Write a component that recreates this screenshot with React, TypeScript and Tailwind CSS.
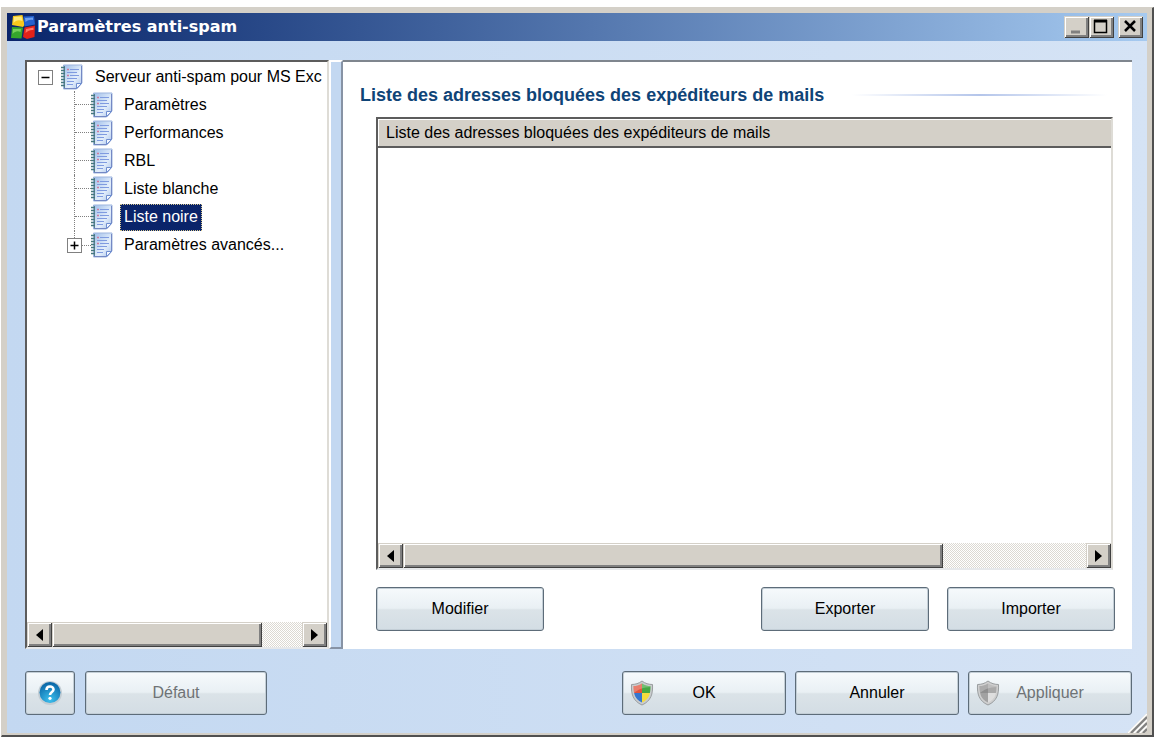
import { clsx } from "clsx";
import { useState } from "react";

const PAGES = [
  "Paramètres",
  "Performances",
  "RBL",
  "Liste blanche",
  "Liste noire",
  "Paramètres avancés...",
];

const RAISED =
  "bg-[#d4d0c8] shadow-[inset_1px_1px_0_#d4d0c8,inset_-1px_-1px_0_#404040,inset_2px_2px_0_#fff,inset_-3px_-3px_0_#808080]";
const SUNKEN =
  "bg-white border-2 border-t-[#5c5c5c] border-l-[#5c5c5c] border-r-[#dedcd6] border-b-[#e6e8ea]";
const GLOSSY =
  "rounded-[3px] border border-[#5d6c79] bg-[linear-gradient(#f6fafc_0%,#e9f0f4_48%,#dbe3e8_52%,#d3dde4_100%)] shadow-[inset_0_0_0_1px_#c3ced6]";

const LogoIcon = () => (
  <svg viewBox="0 0 24 24" className="size-6 shrink-0" aria-hidden="true">
    <path d="M2 1L11.500 0L13.500 10L12 12L1 10Z" fill="#f8c81c" />
    <path d="M12.500 1.500L23 1L24 9.500L13.500 11.500Z" fill="#2461cf" />
    <path d="M1 12L12 12.500L10.500 23.500L0 23Z" fill="#35a62c" />
    <path d="M13.500 12.500L24 10.500L23.500 22L16 24L12 22Z" fill="#e32219" />
    <path d="M3 2L10.500 1.500L11.500 6C8 4.500 5 5 2.500 8Z" fill="#ffea7a" />
    <path d="M14 3L22 2.500L22 5C19 4.500 17 5 14.500 7Z" fill="#6fa0f0" />
    <path d="M2 14L10 14L9.500 17C7 15.500 4 16 1.500 19Z" fill="#78d05c" />
    <path d="M15 14L22.500 12.500L22.500 15C20 14.500 17 15.500 14.500 18Z" fill="#ff7767" />
  </svg>
);

const NotebookIcon = () => (
  <svg viewBox="0 0 22 26" className="h-[26px] w-[22px] shrink-0" aria-hidden="true">
    <defs>
      <linearGradient id="paper" x1="0" y1="0" x2="1" y2="1">
        <stop offset="0" stopColor="#9dbdea" />
        <stop offset=".6" stopColor="#e4effb" />
        <stop offset="1" stopColor="#a5c0ea" />
      </linearGradient>
    </defs>
    <path d="M2.500 1H21V19L15.500 25H2.500Z" fill="url(#paper)" stroke="#9db5de" />
    <path d="M3 24.500H16L20.500 19.500V2" fill="none" stroke="#7488c4" />
    <path d="M15.500 24.500V19.500H20.500Z" fill="#f3f8ff" stroke="#6f8ed0" />
    <path d="M3.500 2V24" stroke="#5a8590" />
    <path d="M0 3.500h4M0 6.500h4M0 9.500h4M0 12.500h4M0 15.500h4M0 18.500h4M0 21.500h4" stroke="#47787e" strokeWidth="1.500" />
    <path d="M6 5.500h2M6 11.500h2" stroke="#d07a9c" strokeWidth="1.500" />
    <path d="M9 5.500h9M6 8.500h10M9 11.500h9M6 14.500h10M6 17.500h7M6 20.500h6" stroke="#7f9be0" />
  </svg>
);

const ShieldIcon = ({ muted = false }: { muted?: boolean }) => {
  const [a, b, c, d] = muted
    ? ["#8f8f8f", "#a9a9a9", "#a2a2a2", "#dedede"]
    : ["#e2533c", "#45a843", "#3576cf", "#f5dc3d"];
  const id = muted ? "shield-muted" : "shield";
  return (
    <svg viewBox="0 0 24 26" className="h-[26px] w-6 shrink-0" aria-hidden="true">
      <clipPath id={id}>
        <path d="M12 3.500C15 5.500 17.500 6 20.500 6C20.500 14 19 19.500 12 22.500C5 19.500 3.500 14 3.500 6C6.500 6 9 5.500 12 3.500Z" />
      </clipPath>
      <path
        d="M12 1C15 3.500 19 4.500 22.500 4.500C23 14 21 21 12 25C3 21 1 14 1.500 4.500C5 4.500 9 3.500 12 1Z"
        fill={muted ? "#cfcfcf" : "#c9ccce"}
        stroke="#999d9f"
      />
      <g clipPath={`url(#${id})`}>
        <path d="M2 2H12V13H2Z" fill={a} />
        <path d="M12 2H22V13H12Z" fill={b} />
        <path d="M2 13H12V24H2Z" fill={c} />
        <path d="M12 13H22V24H12Z" fill={d} />
        <path d="M2 2H22V7C14 7 8 9 3 14Z" fill="#fff" opacity=".25" />
      </g>
    </svg>
  );
};

const HelpIcon = () => (
  <svg viewBox="0 0 26 26" className="size-[26px]" aria-hidden="true">
    <defs>
      <radialGradient id="help" cx=".5" cy=".85" r=".8">
        <stop offset="0" stopColor="#3cc0ee" />
        <stop offset="1" stopColor="#0b69a9" />
      </radialGradient>
    </defs>
    <circle cx="13" cy="13" r="12" fill="#c3cdd4" />
    <circle cx="13" cy="12.500" r="10.500" fill="url(#help)" />
    <path d="M9.500 10C9.500 5.500 16.500 5.500 16.500 9.500C16.500 12 13 12 13 15" fill="none" stroke="#fff" strokeWidth="2.600" />
    <circle cx="13" cy="18.300" r="1.600" fill="#fff" />
  </svg>
);

const Expander = ({ open }: { open: boolean }) => (
  <svg viewBox="0 0 15 15" className="size-[15px] shrink-0" aria-hidden="true">
    <rect x=".5" y=".5" width="14" height="14" fill="#fff" stroke="#808080" />
    <path d={open ? "M3.500 7.500h8" : "M3.500 7.500h8M7.500 3.500v8"} stroke="#000" strokeWidth="1.500" />
  </svg>
);

const Arrow = ({ left = false }: { left?: boolean }) => (
  <button
    type="button"
    aria-label={left ? "Défiler à gauche" : "Défiler à droite"}
    className={clsx("grid h-[25px] w-[25px] shrink-0 place-items-center", RAISED)}
  >
    <svg viewBox="0 0 7 12" className="h-3 w-[7px]" aria-hidden="true">
      <path d={left ? "M7 0V12L0 6Z" : "M0 0V12L7 6Z"} fill="#000" />
    </svg>
  </button>
);

const ScrollBar = ({ thumb }: { thumb: string }) => (
  <div className="flex shrink-0 bg-[#eae8e3]">
    <Arrow left />
    <div className="flex-1 bg-[repeating-conic-gradient(#fff_0_25%,#dcd9d2_0_50%)] bg-[length:2px_2px]">
      <div className={clsx("h-full", thumb, RAISED)} />
    </div>
    <Arrow />
  </div>
);

const PushButton = ({
  children,
  icon,
  className,
  disabled,
}: {
  children: React.ReactNode;
  icon?: React.ReactNode;
  className: string;
  disabled?: boolean;
}) => (
  <button
    type="button"
    disabled={disabled}
    className={clsx("flex h-11 items-center px-[7px] disabled:text-[#6f7376]", GLOSSY, className)}
  >
    {icon}
    <span className="flex-1 text-center">{children}</span>
    {icon && <span className="w-6" />}
  </button>
);

const TitleBar = () => (
  <header className="flex h-7 items-center bg-linear-to-r from-[#0a246a] to-[#a6caf0] pr-1 pl-1 text-white">
    <LogoIcon />
    <h1 className="ml-0.5 flex-1 font-['DejaVu_Sans',sans-serif] text-base leading-6 font-bold">
      Paramètres anti-spam
    </h1>
    <button type="button" aria-label="Réduire" className={clsx("h-[22px] w-[25px]", RAISED)}>
      <svg viewBox="0 0 25 22" aria-hidden="true">
        <path d="M7 16h9" stroke="#808080" strokeWidth="3" />
      </svg>
    </button>
    <button type="button" aria-label="Agrandir" className={clsx("h-[22px] w-[25px]", RAISED)}>
      <svg viewBox="0 0 25 22" aria-hidden="true">
        <path d="M5 5h13" stroke="#000" strokeWidth="3" />
        <path d="M5.500 4v12.500h12v-12.500" fill="none" stroke="#000" strokeWidth="1.500" />
      </svg>
    </button>
    <button type="button" aria-label="Fermer" className={clsx("ml-1 h-[22px] w-[25px]", RAISED)}>
      <svg viewBox="0 0 25 22" aria-hidden="true">
        <path d="M7 5l10 10M17 5l-10 10" stroke="#000" strokeWidth="2.500" />
      </svg>
    </button>
  </header>
);

const SettingsTree = () => {
  const [selected, setSelected] = useState("Liste noire");

  return (
    <nav className={clsx("flex w-[304px] shrink-0 flex-col overflow-hidden", SUNKEN)}>
      <div className="flex-1 overflow-hidden pt-px pl-[11px] whitespace-nowrap">
        <div className="flex h-7 items-center">
          <Expander open />
          <span className="ml-2">
            <NotebookIcon />
          </span>
          <button type="button" className="ml-3">
            Serveur anti-spam pour MS Exc
          </button>
        </div>
        <ul className="pl-[29px]">
          {PAGES.map((page, i) => (
            <li key={page} className="flex h-7 items-center">
              {i < PAGES.length - 1 ? (
                <span className="ml-[7px] grid h-7 w-[17px] grid-rows-2 border-l border-dotted border-[#808080]">
                  <span className="border-b border-dotted border-[#808080]" />
                </span>
              ) : (
                <>
                  <span className="flex h-7 w-[15px] flex-col items-center">
                    <span className="h-[7px] border-l border-dotted border-[#808080]" />
                    <Expander open={false} />
                  </span>
                  <span className="w-[9px] border-b border-dotted border-[#808080]" />
                </>
              )}
              <NotebookIcon />
              <button
                type="button"
                onClick={() => setSelected(page)}
                className={clsx(
                  "ml-[7px] h-[27px] border border-dotted px-[3px] leading-6",
                  page === selected
                    ? "border-[#d8c890] bg-[#0a246a] text-white"
                    : "border-transparent"
                )}
              >
                {page}
              </button>
            </li>
          ))}
        </ul>
      </div>
      <ScrollBar thumb="w-[84%]" />
    </nav>
  );
};

const BlockedSenders = () => (
  <main className="flex min-w-0 flex-1 flex-col border-t-2 border-[#7f868e] bg-white px-[17px] pt-[23px] pb-[18px]">
    <div className="flex items-center gap-7">
      <h2 className="text-lg leading-5 font-bold text-[#0f4477]">
        Liste des adresses bloquées des expéditeurs de mails
      </h2>
      <span className="mr-2 h-0.5 flex-1 bg-linear-to-r from-white via-[#b4c5ea] to-white" />
    </div>
    <div className={clsx("mt-3 mr-0.5 ml-4 flex flex-1 flex-col", SUNKEN)}>
      <div className="flex-1">
        <table className="w-full">
          <thead>
            <tr>
              <th
                scope="col"
                className="h-7 border-b-2 border-[#5c5c5c] bg-[#d4d0c8] px-2 text-left font-normal shadow-[inset_1px_1px_0_#fff]"
              >
                Liste des adresses bloquées des expéditeurs de mails
              </th>
            </tr>
          </thead>
          <tbody />
        </table>
      </div>
      <ScrollBar thumb="w-[79%]" />
    </div>
    <div className="mt-[17px] ml-4 flex">
      <PushButton className="w-[168px]">Modifier</PushButton>
      <PushButton className="mr-[18px] ml-auto w-[168px]">Exporter</PushButton>
      <PushButton className="w-[168px]">Importer</PushButton>
    </div>
  </main>
);

export default function App() {
  return (
    <div className="flex min-h-screen flex-col bg-white pt-[7px] pr-0.5 pl-px font-['Liberation_Sans',Arial,sans-serif] text-base leading-6 text-black">
      <div className="flex flex-1 flex-col border-t border-r-2 border-b-2 border-l border-t-[#d4d0c8] border-r-[#505050] border-b-[#505050] border-l-[#d4d0c8]">
        <div className="flex flex-1 flex-col border-t-[5px] border-r-[5px] border-b-2 border-l-[5px] border-[#d4d0c8]">
          <TitleBar />
          <div className="relative flex flex-1 flex-col bg-linear-to-r from-[#c3d8f1] to-[#d5e3f5] pt-[19px] pr-[15px] pb-[18px] pl-[18px]">
            <div className="flex flex-1">
              <SettingsTree />
              <div className="w-3.5 shrink-0 border-2 border-t-white border-r-[#8793a5] border-b-[#8793a5] border-l-white bg-[#c3d8f1]" />
              <BlockedSenders />
            </div>
            <footer className="mt-[22px] flex">
              <button
                type="button"
                aria-label="Aide"
                className={clsx("grid h-11 w-[50px] place-items-center", GLOSSY)}
              >
                <HelpIcon />
              </button>
              <PushButton disabled className="ml-2.5 w-[182px]">
                Défaut
              </PushButton>
              <PushButton className="ml-auto w-[164px]" icon={<ShieldIcon />}>
                OK
              </PushButton>
              <PushButton className="ml-[9px] w-[164px]">Annuler</PushButton>
              <PushButton disabled className="ml-[9px] w-[164px]" icon={<ShieldIcon muted />}>
                Appliquer
              </PushButton>
            </footer>
            <svg viewBox="0 0 20 20" className="absolute right-0 bottom-0 size-5" aria-hidden="true">
              <path d="M20 0V20H0Z" fill="#d4d0c8" />
              <path d="M20 1L1 20M20 7L7 20M20 13L13 20" stroke="#fff" strokeWidth="1.500" />
              <path d="M20 4L4 20M20 10L10 20M20 16L16 20" stroke="#808080" strokeWidth="2" />
            </svg>
          </div>
        </div>
      </div>
    </div>
  );
}
